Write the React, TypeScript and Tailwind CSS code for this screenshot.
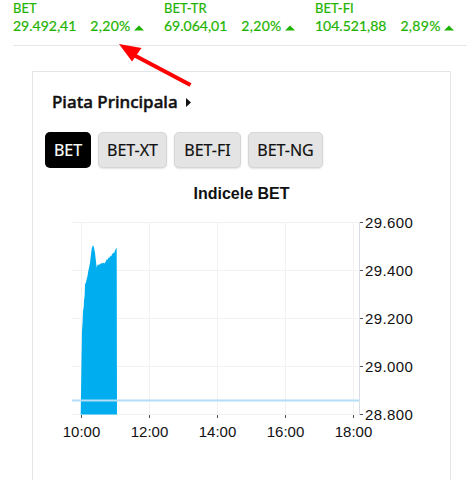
import React from "react";

const tickers = [
  { name: "BET", value: "29.492,41", pct: "2,20%" },
  { name: "BET-TR", value: "69.064,01", pct: "2,20%" },
  { name: "BET-FI", value: "104.521,88", pct: "2,89%" },
];

const yLabels = [
  { y: 18.5, t: "29.600" },
  { y: 66.5, t: "29.400" },
  { y: 114.5, t: "29.200" },
  { y: 162.5, t: "29.000" },
  { y: 210.5, t: "28.800" },
];
const xLabels = [
  { x: 48.5, t: "10:00" },
  { x: 116.5, t: "12:00" },
  { x: 184.5, t: "14:00" },
  { x: 252.5, t: "16:00" },
  { x: 320.5, t: "18:00" },
];

const area =
  "47.7,210.5 48.6,150 49,127 49.6,118 50,107 50.6,104 51,97 51.6,92 52,80 52.8,79 53.7,75 54.5,72 55.3,67 56,64 57,58.7 57.8,52 58.7,45 59.5,42 60.3,41.5 61,44 62,48.7 62.8,56 63.7,63.7 64.5,61 65.3,60.3 66,61.5 67,59.5 68,60 68.7,58.7 69.5,59.5 70.3,58.5 71.2,59.5 72,58.7 73,57 73.7,55.3 74.6,55.8 75.5,53.5 76.3,54 77,52 78,52.4 79,50.5 80.3,48.7 81.2,48.9 82,46.5 83,44.7 83.7,43.7 84,210.5";

function Up() {
  return (
    <svg width="10" height="6" viewBox="0 0 10 6" className="ml-[3px] mb-[4px] inline-block">
      <polygon points="0,5.5 5,0.5 10,5.5" fill="#1db300" />
    </svg>
  );
}

export default function App() {
  return (
    <div className="relative w-[467px] h-[480px] overflow-hidden bg-white">
      {/* Ticker bar */}
      <div className="ml-[13px] border-b border-[#e6e6e6] pb-[10px]" style={{ fontFamily: "Lato, sans-serif" }}>
        <div className="flex text-[#1db300]">
          {tickers.map((t) => (
            <div key={t.name} className="w-[151px] shrink-0">
              <div className="text-[13px] leading-[16px] [-webkit-text-stroke:0.2px_#1db300]">{t.name}</div>
              <div className="flex items-end text-[14px] leading-[18px] pt-[1px] [-webkit-text-stroke:0.2px_#1db300]">
                <span>{t.value}</span>
                <span className="ml-[14px] tracking-[0.3px]">{t.pct}</span>
                <Up />
              </div>
            </div>
          ))}
        </div>
      </div>

      {/* Card */}
      <div className="ml-[32px] mt-[25px] w-[419px] h-[500px] border border-[#e5e5e5]">
        <div className="pt-[18px] pl-[19px] flex items-center" style={{ fontFamily: '"Noto Sans", sans-serif' }}>
          <span className="text-[17px] leading-[24px] font-medium text-[#111] [-webkit-text-stroke:0.45px_#111]">Piata Principala</span>
          <svg width="5" height="9" viewBox="0 0 5 9" className="ml-[8px] mt-[1px]">
            <polygon points="0,0 5,4.5 0,9" fill="#111" />
          </svg>
        </div>
        <div className="mt-[18px] pl-[12px] flex gap-[7px]" style={{ fontFamily: '"Noto Sans", sans-serif' }}>
          <button className="h-[36px] w-[46px] rounded-[5px] bg-black text-white text-[16px] leading-none [-webkit-text-stroke:0.2px_#fff]">BET</button>
          <button className="h-[36px] w-[69px] rounded-[5px] bg-[#e4e4e4] border border-[#d6d6d6] shadow-[0_1px_2px_rgba(0,0,0,0.12)] text-[#111] text-[16px] leading-none [-webkit-text-stroke:0.2px_#111]">BET-XT</button>
          <button className="h-[36px] w-[67px] rounded-[5px] bg-[#e4e4e4] border border-[#d6d6d6] shadow-[0_1px_2px_rgba(0,0,0,0.12)] text-[#111] text-[16px] leading-none [-webkit-text-stroke:0.2px_#111]">BET-FI</button>
          <button className="h-[36px] w-[75px] rounded-[5px] bg-[#e4e4e4] border border-[#d6d6d6] shadow-[0_1px_2px_rgba(0,0,0,0.12)] text-[#111] text-[16px] leading-none [-webkit-text-stroke:0.2px_#111]">BET-NG</button>
        </div>
        <div
          className="mt-[16px] text-center text-[16px] leading-[20px] font-bold text-[#111]"
          style={{ fontFamily: '"Liberation Sans", Arial, sans-serif' }}
        >
          Indicele BET
        </div>
        <svg width="416" height="260" className="block" style={{ fontFamily: '"Liberation Sans", Arial, sans-serif' }}>
          {yLabels.map((l) => (
            <line key={"h" + l.t} x1="39" x2="326" y1={l.y} y2={l.y} stroke="#f2f2f2" strokeWidth="1" />
          ))}
          {xLabels.map((l) => (
            <line key={"v" + l.t} x1={l.x} x2={l.x} y1="18" y2="210.5" stroke="#f2f2f2" strokeWidth="1" />
          ))}
          <polygon points={area} fill="#00aeef" />
          <line x1="39" x2="326" y1="196.5" y2="196.5" stroke="#b4def6" strokeWidth="2" />
          <line x1="326.5" x2="326.5" y1="18" y2="211" stroke="#d8dce6" strokeWidth="1" />
          {yLabels.map((l) => (
            <g key={"y" + l.t}>
              <line x1="327" x2="330" y1={l.y} y2={l.y} stroke="#555" strokeWidth="1" />
              <text x="332" y={l.y + 5.3} fontSize="15" fill="#111" letterSpacing="0.4">
                {l.t}
              </text>
            </g>
          ))}
          {xLabels.map((l) => (
            <g key={"x" + l.t}>
              <line x1={l.x} x2={l.x} y1="211" y2="214" stroke="#555" strokeWidth="1" />
              <text x={l.x} y="233" fontSize="15" fill="#111" textAnchor="middle">
                {l.t}
              </text>
            </g>
          ))}
        </svg>
      </div>

      {/* Annotation arrow */}
      <svg width="467" height="100" className="absolute left-0 top-0 pointer-events-none">
        <line x1="190.5" y1="85" x2="130" y2="53" stroke="#ff0000" strokeWidth="4" />
        <polygon points="119,44 141.5,48 132,61.5" fill="#ff0000" />
      </svg>
    </div>
  );
}
